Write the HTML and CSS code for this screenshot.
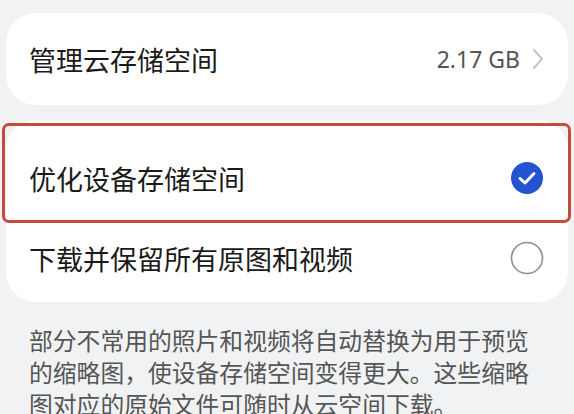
FILE: index.html
```html
<!DOCTYPE html>
<html lang="zh-CN">
<head>
    <meta charset="UTF-8">
    <title>云空间存储</title>
    <link rel="stylesheet" href="styles.css">
</head>
<body>

    <div class="card manage">
        <span class="title">管理云存储空间</span>
        <span class="value">2.17 GB
            <svg class="chevron" width="12" height="22" viewBox="0 0 12 22">
                <polyline points="2,2 10,11 2,20" fill="none" stroke="#c4c4c4" stroke-width="2" stroke-linecap="round" stroke-linejoin="round"/>
            </svg>
        </span>
    </div>

    <div class="card options">
        <div class="highlight"></div>
        <div class="row">
            <span class="title">优化设备存储空间</span>
            <svg class="radio" width="34" height="34" viewBox="0 0 34 34">
                <circle cx="17" cy="17" r="16" fill="#2453d4"/>
                <polyline points="10,17.5 15,22 24,12.5" fill="none" stroke="#fff" stroke-width="3" stroke-linecap="round" stroke-linejoin="round"/>
            </svg>
        </div>
        <div class="row">
            <span class="title">下载并保留所有原图和视频</span>
            <svg class="radio" width="34" height="34" viewBox="0 0 34 34">
                <circle cx="17" cy="17" r="15.5" fill="none" stroke="#8e8e8e" stroke-width="1.6"/>
            </svg>
        </div>
    </div>

    <p class="note">部分不常用的照片和视频将自动替换为用于预览的缩略图，使设备存储空间变得更大。这些缩略图对应的原始文件可随时从云空间下载。</p>

</body>
</html>
```

FILE: styles.css
```css
body { margin: 0; padding: 13px 6px 0 6px; background-color: #f1f2f4; font-family: "Noto Sans CJK SC", "Noto Sans", sans-serif; color: #1a1a1a; }
.card { background-color: #fff; border-radius: 30px; }
.title { font-size: 27px; line-height: 1; }
.manage { height: 92px; display: flex; align-items: center; justify-content: space-between; padding: 0 24px 0 23px; box-sizing: border-box; }
.value { display: flex; align-items: center; gap: 12px; font-size: 23px; color: #555; font-family: "Noto Sans", "Noto Sans CJK SC", sans-serif; }
.chevron { display: block; }
.options { position: relative; margin-top: 15px; padding: 18px 0 4px 0; }
.row { height: 80px; display: flex; align-items: center; justify-content: space-between; padding: 0 24px 0 23px; }
.radio { display: block; }
.highlight { position: absolute; top: 3px; left: -4px; right: -3px; height: 100px; border: 3px solid #c9493d; border-radius: 7px; box-sizing: border-box; }
.note { margin: 22px 0 0 0; padding: 0 20px 0 23px; font-size: 23.8px; line-height: 32px; color: #555; }
```
